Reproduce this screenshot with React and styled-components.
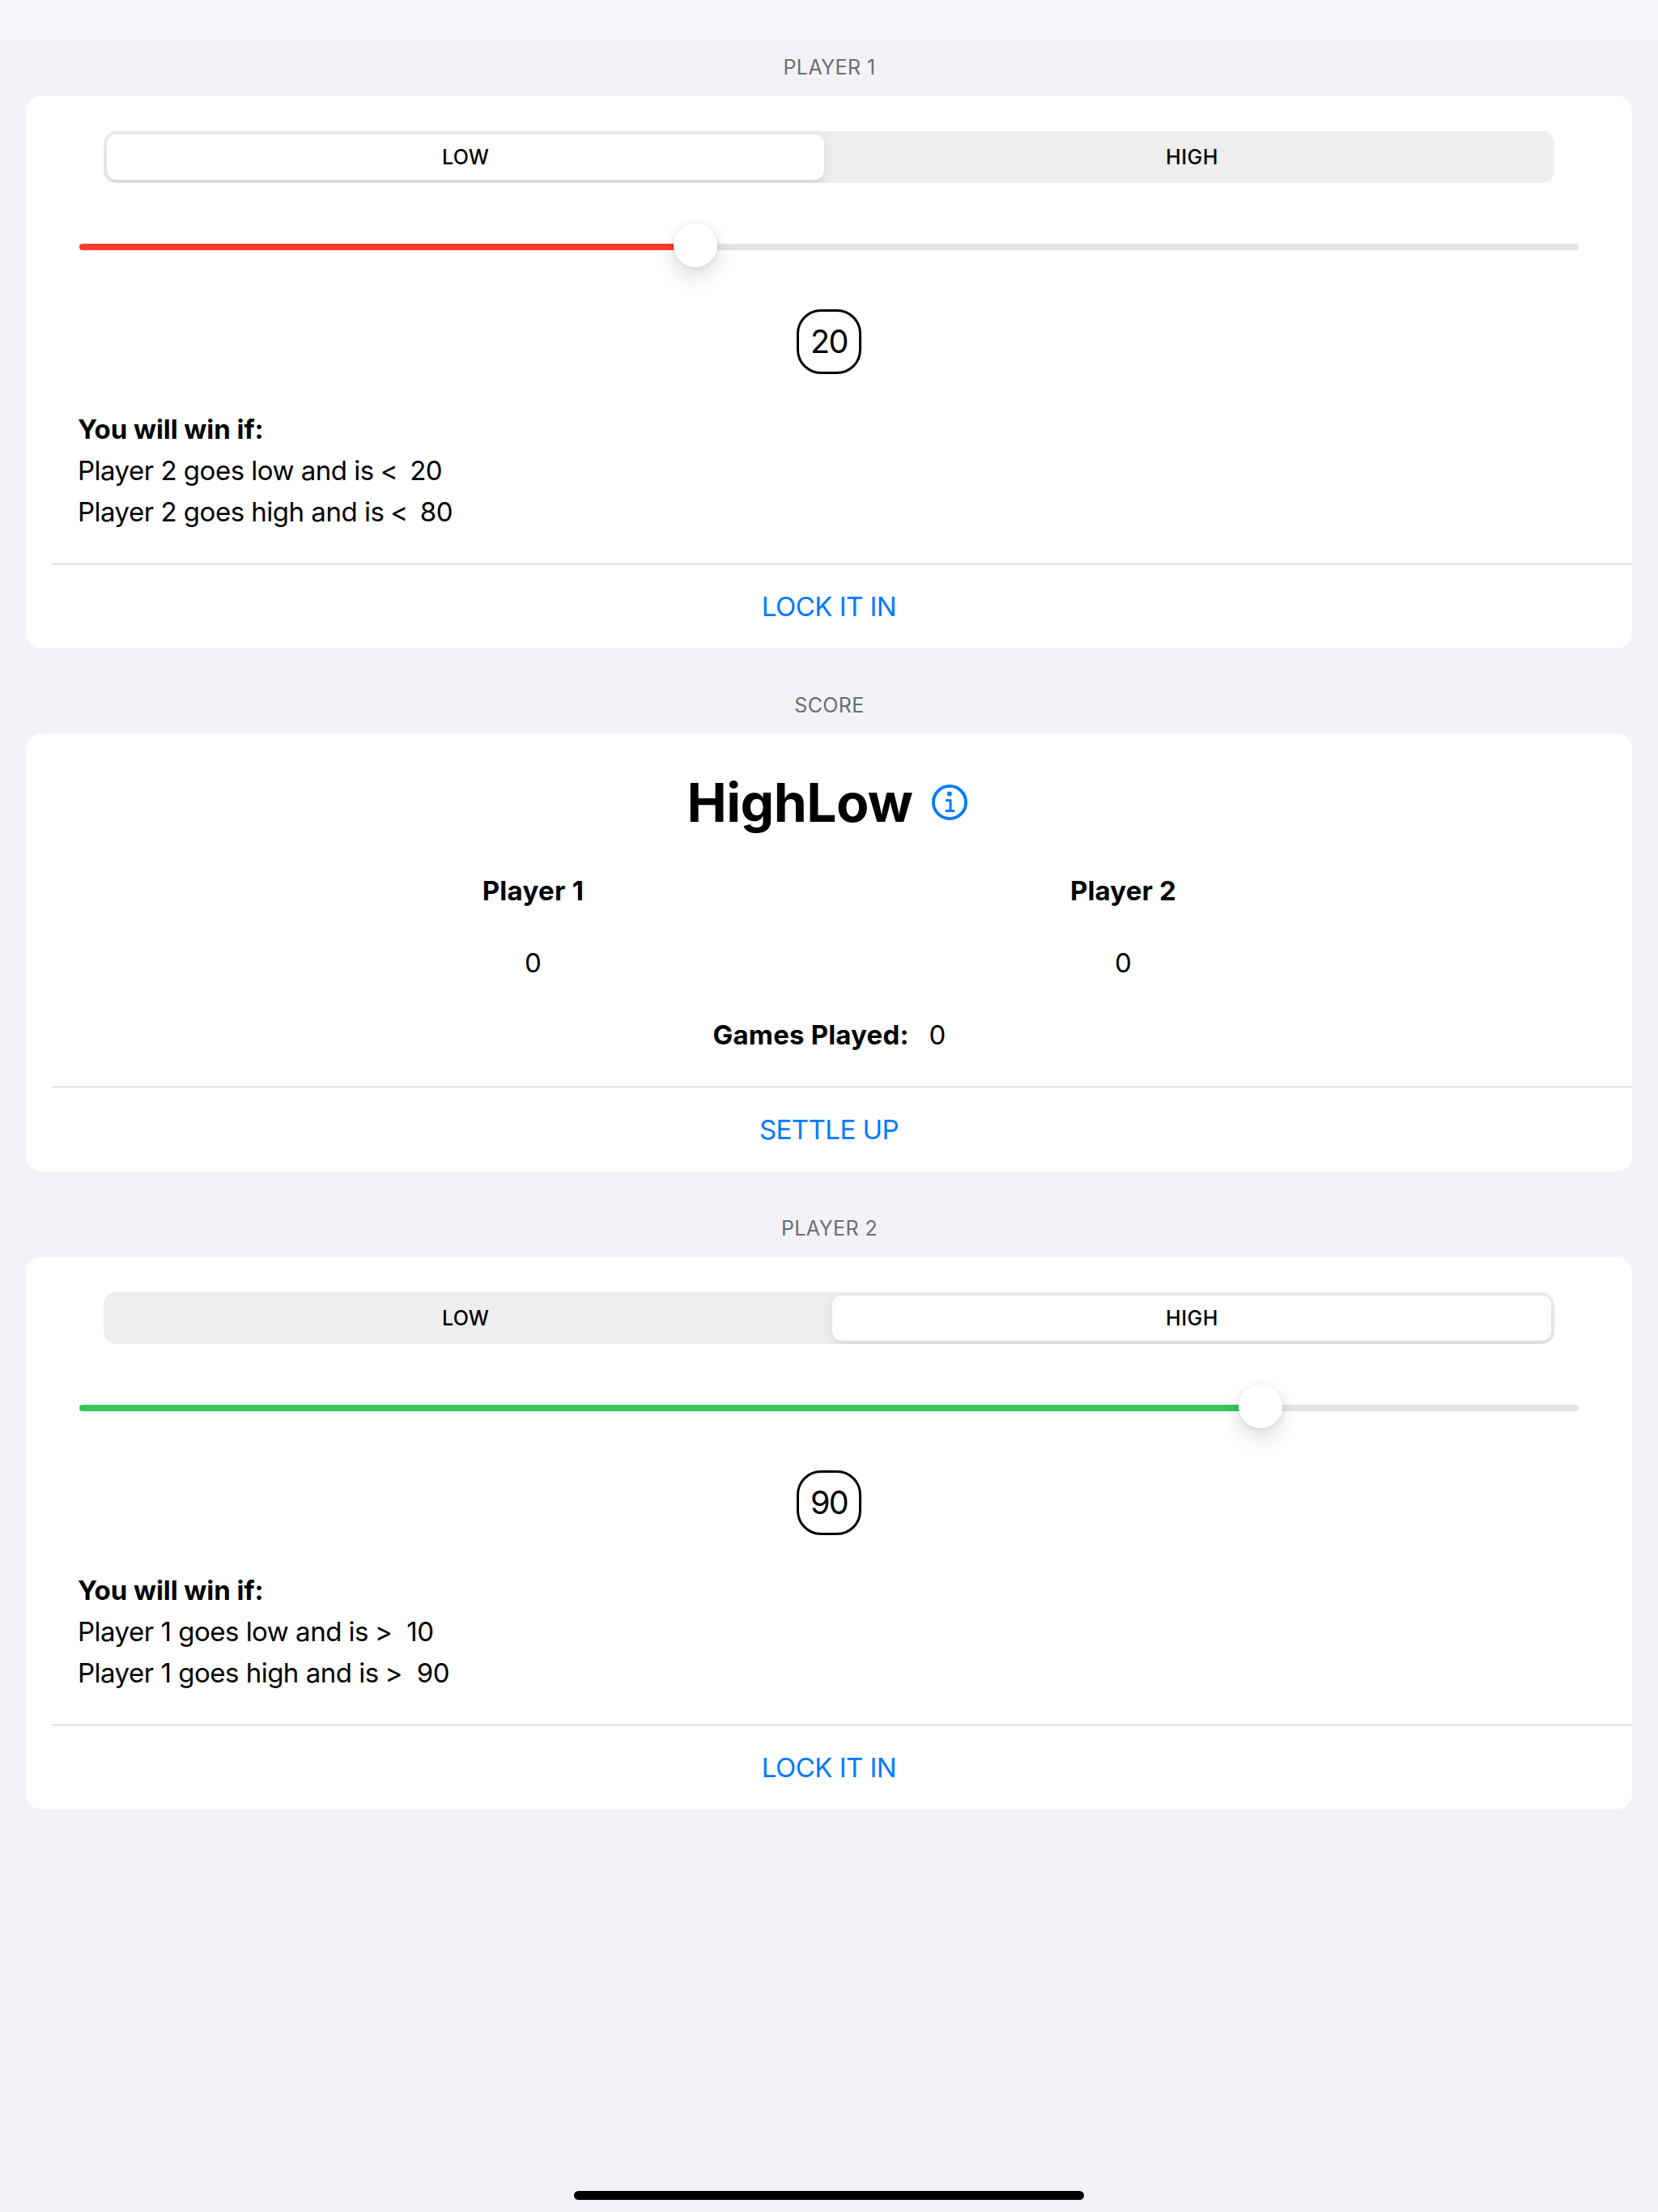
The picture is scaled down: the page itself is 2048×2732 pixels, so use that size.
import React from "react";
import styled, { createGlobalStyle } from "styled-components";

const GlobalStyle = createGlobalStyle`
  *, *::before, *::after { box-sizing: border-box; }
  body {
    margin: 0;
    background: #f2f2f7;
    color: #000;
    font-family: Inter, "Liberation Sans", sans-serif;
    font-size: 33px;
    line-height: 40px;
  }
`;

const Page = styled.main`
  display: flex;
  flex-direction: column;
  min-height: 2732px;
`;

const StatusBar = styled.div`
  height: 53px;
  margin-bottom: -40px;
  background: #f6f4f9;
`;

const Section = styled.section`
  display: flex;
  flex-direction: column;
  padding: 55px 32px 0;
`;

const SectionHeader = styled.h2`
  margin: 0 0 20px;
  padding-left: 1px;
  font-size: 25px;
  font-weight: 400;
  line-height: 30px;
  letter-spacing: 0.4px;
  text-align: center;
  color: #6d6d72;
`;

const Card = styled.div`
  display: flex;
  flex-direction: column;
  border-radius: 20px;
  background: #fff;
`;

const CardBody = styled.div`
  display: flex;
  flex-direction: column;
  align-items: center;
  height: 578px;
  padding-top: 44px;
`;

const ActionButton = styled.button`
  height: 105px;
  margin: 0 0 0 32px;
  padding: 0 32px 0 0;
  border: 0;
  border-top: 1px solid #c6c6c8;
  background: none;
  font: inherit;
  letter-spacing: -0.54px;
  color: #007aff;
`;

const Segmented = styled.div`
  display: grid;
  grid-template-columns: 1fr 1fr;
  width: 1792px;
  height: 64px;
  overflow: hidden;
  border-radius: 15px;
  background: #eeeeee;
`;

const Segment = styled.button`
  margin: ${(p) => (p.$last ? "4px" : "4px 6px 4px 4px")};
  padding: ${(p) => (p.$last ? "0 0 0 1px" : "0")};
  border: 0;
  border-radius: 12px;
  background: ${(p) => (p.$active ? "#fff" : "transparent")};
  box-shadow: ${(p) =>
    p.$active ? "0 5px 16px rgba(0, 0, 0, 0.09), 0 4px 2px rgba(0, 0, 0, 0.025)" : "none"};
  font-family: inherit;
  font-size: 25px;
  font-weight: 500;
  line-height: 30px;
  letter-spacing: ${(p) => (p.$last ? 0.6 : 0.1)}px;
  color: #000;
`;

const Slider = styled.div`
  position: relative;
  display: flex;
  align-items: center;
  width: 1856px;
  height: 54px;
  margin-top: 50px;
  padding: 4px 2px 0;
`;

const Track = styled.div`
  flex: 1;
  height: 8px;
  overflow: hidden;
  border-radius: 4px;
  background: #e4e4e5;
`;

const TrackFill = styled.div`
  width: ${(p) => p.$fraction * 100}%;
  height: 100%;
  background: ${(p) => p.$color};
`;

const Thumb = styled.div`
  position: absolute;
  top: 0;
  left: calc((100% - 54px) * ${(p) => p.$fraction});
  width: 54px;
  height: 54px;
  border-radius: 50%;
  background: #fff;
  box-shadow: 0 12px 26px rgba(0, 0, 0, 0.13), 0 1px 8px rgba(0, 0, 0, 0.09);
`;

const Badge = styled.div`
  display: flex;
  align-items: center;
  justify-content: center;
  width: 80px;
  height: 80px;
  margin-top: 52px;
  border: 3px solid #000;
  border-radius: 30px;
  font-size: 39.5px;
  letter-spacing: -1.6px;
`;

const Conditions = styled.div`
  display: flex;
  flex-direction: column;
  align-self: stretch;
  gap: 1px;
  margin-top: 43px;
  padding-left: 64px;
  line-height: 50px;
`;

const ConditionsTitle = styled.div`
  font-weight: 650;
  letter-spacing: -0.05px;
`;

const Condition = styled.div`
  letter-spacing: -0.5px;
  white-space: pre;
`;

const Operator = styled.span`
  margin: 0 ${(p) => (p.$greater ? 0.3 : -2.4)}px 0 -0.8px;
`;

const ScoreBody = styled.div`
  display: flex;
  flex-direction: column;
  align-items: center;
  gap: 49px;
  height: 436px;
  padding-top: 45px;
`;

const TitleRow = styled.div`
  display: flex;
  align-items: center;
  gap: 24px;
  padding-right: 4px;
`;

const Title = styled.h1`
  margin: 0;
  font-size: 66px;
  font-weight: 700;
  line-height: 80px;
  letter-spacing: -0.6px;
`;

const InfoIcon = styled.svg`
  display: block;
  width: 44px;
  height: 44px;
  fill: none;
  stroke: #007aff;
`;

const Scores = styled.div`
  display: grid;
  grid-template-columns: 128px 128px;
  column-gap: 601px;
  row-gap: 49px;
  justify-items: center;
  padding-right: 2px;
`;

const Strong = styled.span`
  font-weight: 650;
  letter-spacing: ${(p) => p.$tracking}px;
  white-space: nowrap;
`;

const GamesRow = styled.div`
  display: flex;
  gap: 25px;
  padding-left: 1px;
`;

const HomeIndicator = styled.div`
  width: 630px;
  height: 11px;
  margin: auto auto 15px;
  border-radius: 6px;
  background: #000;
`;

function PlayerSection({ name, choice, fraction, color, value, rules }) {
  return (
    <Section>
      <SectionHeader>{name}</SectionHeader>
      <Card>
        <CardBody>
          <Segmented>
            <Segment $active={choice === "LOW"}>LOW</Segment>
            <Segment $last $active={choice === "HIGH"}>HIGH</Segment>
          </Segmented>
          <Slider>
            <Track>
              <TrackFill $fraction={fraction} $color={color} />
            </Track>
            <Thumb $fraction={fraction} />
          </Slider>
          <Badge>{value}</Badge>
          <Conditions>
            <ConditionsTitle>You will win if:</ConditionsTitle>
            {rules.map(([text, operator, limit]) => (
              <Condition key={text}>
                {text} <Operator $greater={operator === ">"}>{operator}</Operator>
                {"  "}
                {limit}
              </Condition>
            ))}
          </Conditions>
        </CardBody>
        <ActionButton>LOCK IT IN</ActionButton>
      </Card>
    </Section>
  );
}

function ScoreSection() {
  return (
    <Section>
      <SectionHeader>SCORE</SectionHeader>
      <Card>
        <ScoreBody>
          <TitleRow>
            <Title>HighLow</Title>
            <InfoIcon viewBox="0 0 44 44">
              <circle cx="22" cy="22" r="20.1" strokeWidth="3.8" />
              <circle cx="21.8" cy="11.5" r="3" fill="#007aff" stroke="none" />
              <path
                d="M18.2 19.5H23V32.5M17.9 32.5H27.1"
                strokeWidth="3"
                strokeLinecap="round"
                strokeLinejoin="round"
              />
            </InfoIcon>
          </TitleRow>
          <Scores>
            <Strong $tracking={0.3}>Player 1</Strong>
            <Strong $tracking={0.15}>Player 2</Strong>
            <span>0</span>
            <span>0</span>
          </Scores>
          <GamesRow>
            <Strong $tracking={0.18}>Games Played:</Strong>
            <span>0</span>
          </GamesRow>
        </ScoreBody>
        <ActionButton>SETTLE UP</ActionButton>
      </Card>
    </Section>
  );
}

export default function App() {
  return (
    <>
      <GlobalStyle />
      <Page>
        <StatusBar />
        <PlayerSection
          name="PLAYER 1"
          choice="LOW"
          fraction={20 / 49}
          color="#ff3b30"
          value={20}
          rules={[
            ["Player 2 goes low and is", "<", 20],
            ["Player 2 goes high and is", "<", 80],
          ]}
        />
        <ScoreSection />
        <PlayerSection
          name="PLAYER 2"
          choice="HIGH"
          fraction={39 / 49}
          color="#34c759"
          value={90}
          rules={[
            ["Player 1 goes low and is", ">", 10],
            ["Player 1 goes high and is", ">", 90],
          ]}
        />
        <HomeIndicator />
      </Page>
    </>
  );
}
